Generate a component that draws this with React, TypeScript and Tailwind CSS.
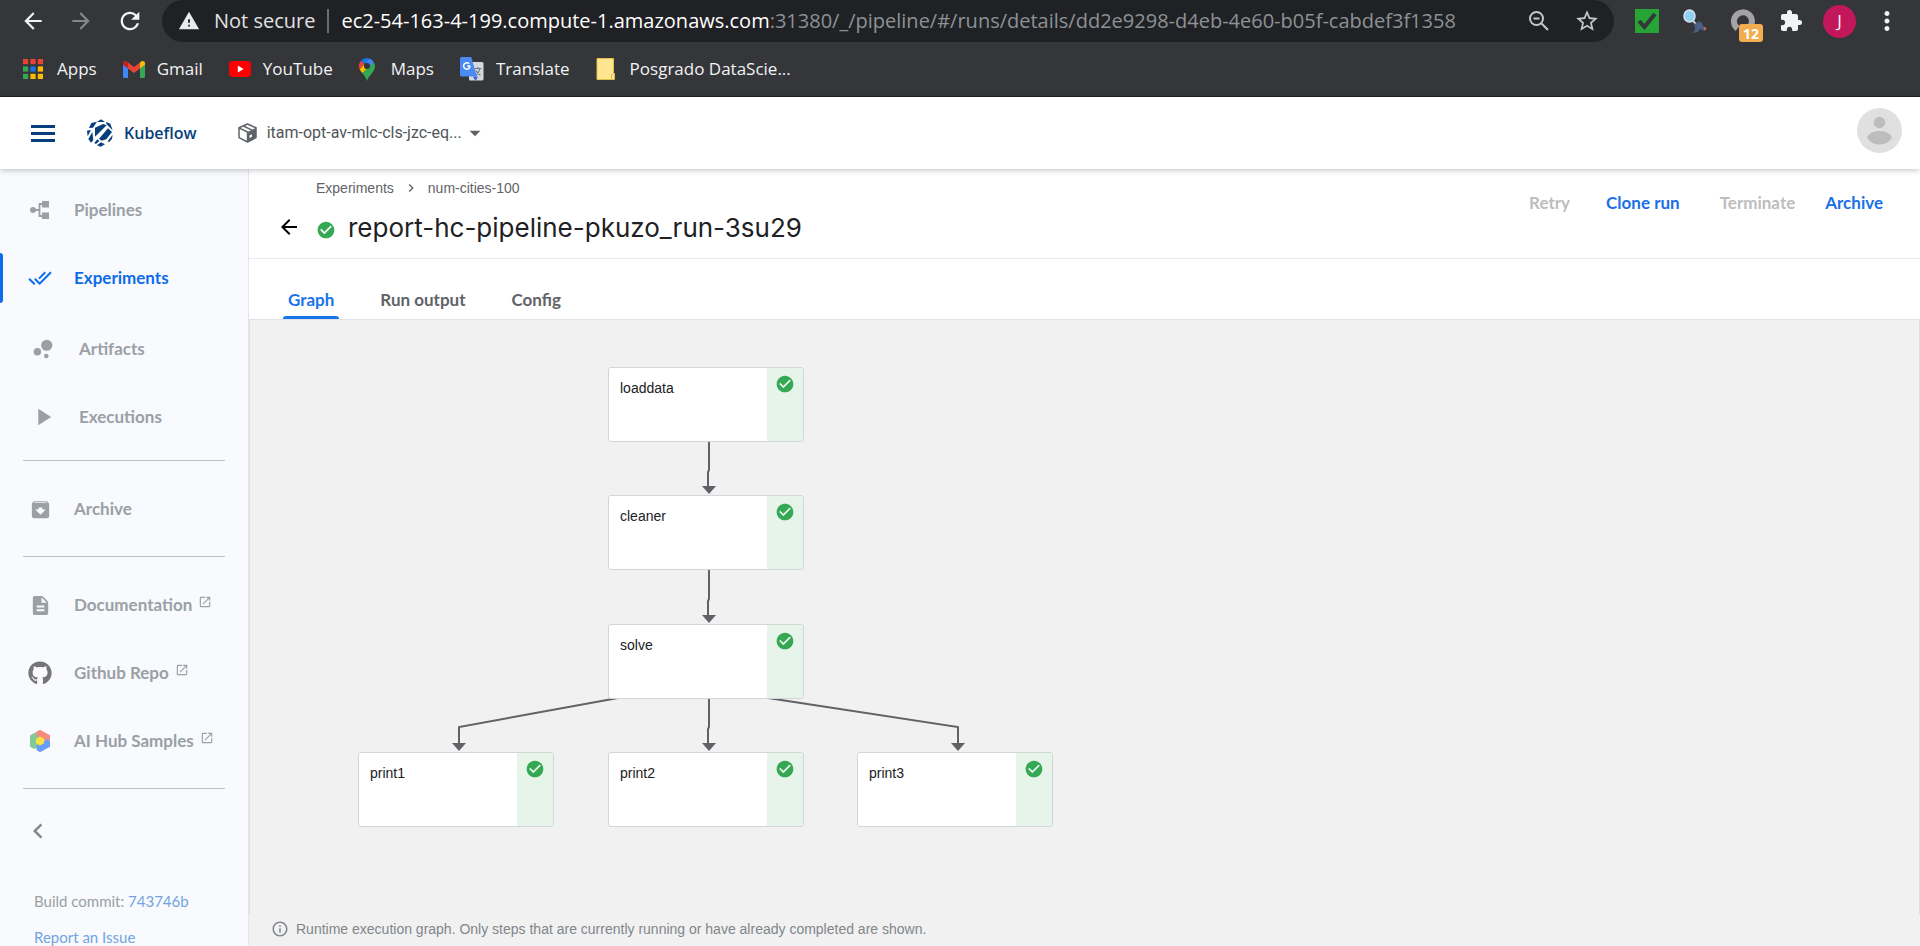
import React from "react";
import {
  MdArchive,
  MdArrowBack,
  MdArrowDropDown,
  MdArrowForward,
  MdBubbleChart,
  MdCheckCircle,
  MdChevronLeft,
  MdChevronRight,
  MdDescription,
  MdDoneAll,
  MdExtension,
  MdInfoOutline,
  MdMoreVert,
  MdOpenInNew,
  MdPlayArrow,
  MdRefresh,
  MdStarBorder,
  MdWarning,
} from "react-icons/md";
import { FaGithub } from "react-icons/fa";

const APP_DOTS = [
  "#ea4335", "#ea4335", "#ea4335",
  "#34a853", "#1a73e8", "#fbbc04",
  "#34a853", "#fbbc04", "#fbbc04",
];

function AppsIcon() {
  return (
    <svg className="h-5 w-5" viewBox="0 0 20 20" aria-hidden="true">
      {APP_DOTS.map((color, i) => (
        <rect key={i} x={(i % 3) * 7.4} y={Math.floor(i / 3) * 7.4} width="5.2" height="5.2" fill={color} />
      ))}
    </svg>
  );
}

function GmailIcon() {
  return (
    <svg className="h-[17px] w-[22px]" viewBox="0 0 22 17" aria-hidden="true">
      <path d="M0 3.5 5 7v10H1.5A1.5 1.5 0 0 1 0 15.500Z" fill="#4285f4" />
      <path d="M22 3.500 17 7v10h3.500A1.500 1.500 0 0 0 22 15.500Z" fill="#34a853" />
      <path d="M17 1.400V7.400L22 3.700V2.200C22 .2 19.700-.6 18.200.5Z" fill="#fbbc04" />
      <path d="M5 7.400V1.400L11 6l6-4.600v6L11 12Z" fill="#ea4335" />
      <path d="M0 2.200v1.500L5 7.400v-6L3.800.5C2.300-.6 0 .2 0 2.200Z" fill="#c5221f" />
    </svg>
  );
}

function YouTubeIcon() {
  return (
    <svg className="h-4 w-[22px]" viewBox="0 0 22 16" aria-hidden="true">
      <rect width="22" height="16" rx="4" fill="#f00" />
      <path d="M8.800 4.600v6.800L14.600 8Z" fill="#fff" />
    </svg>
  );
}

function MapsIcon() {
  return (
    <svg className="h-[23px] w-4" viewBox="0 0 16 23" aria-hidden="true">
      <path d="M8 0a8 8 0 0 0-6.200 2.900L5.600 6.100 10.500.4A8 8 0 0 0 8 0Z" fill="#1a73e8" />
      <path d="M1.800 2.900A8 8 0 0 0 .7 11.300L5.600 6.100Z" fill="#ea4335" />
      <path d="M10.500.4 5.600 6.100a3.200 3.200 0 0 1 4.900 4L15 4.500A8 8 0 0 0 10.500.4Z" fill="#4285f4" />
      <path d="M5.600 6.100.7 11.300c.6 1.300 1.500 2.500 2.500 3.800l7.300-5A3.200 3.200 0 0 1 5.600 6.100Z" fill="#fbbc04" />
      <path d="M15 4.500 3.200 15.100C5 17.300 6.700 18.700 8 23c1.700-6 8-8.500 8-15a8 8 0 0 0-1-3.500Z" fill="#34a853" />
      <circle cx="8" cy="8" r="3" fill="#35363a" />
    </svg>
  );
}

function TranslateIcon() {
  return (
    <svg className="h-6 w-6" viewBox="0 0 24 24" aria-hidden="true">
      <rect x="9" y="5" width="14.500" height="18.500" rx="1.500" fill="#d5d8dc" />
      <path d="M13 19.500h5L15.500 24Z" fill="#3b5bdb" />
      <path d="M1.500 0h9.700L17 19.500H1.500A1.500 1.500 0 0 1 0 18V1.500A1.500 1.500 0 0 1 1.500 0Z" fill="#4a8af4" />
      <path d="M10 8.700a3.200 3.200 0 1 1-.9-2M10 9H7.200" fill="none" stroke="#fff" strokeWidth="1.500" />
      <path d="M14.500 11.500h7M18 10v1.500M20 11.500c-.5 3-2 5-4 6.500M16 13.500c.9 2 2.300 3.600 4.500 4.800" fill="none" stroke="#6b7884" strokeWidth="1.200" />
    </svg>
  );
}

function FolderIcon() {
  return (
    <svg className="h-[22px] w-5" viewBox="0 0 20 22" aria-hidden="true">
      <path d="M1 .5h16.500V15l1 .5v6H1Z" fill="#fde68f" stroke="#e3bf4b" />
      <path d="M15.500 21v-4.500l3-1" fill="none" stroke="#e3bf4b" />
    </svg>
  );
}

function KubeflowLogo() {
  return (
    <svg className="h-7 w-[26px] shrink-0" viewBox="0 0 78 82" aria-hidden="true" fill="#073f7d">
      <path d="M30 8 42 0l12 8Z" />
      <path d="M6 26 13 11 30 7 18 25Z" />
      <path d="M57 8 70 13l7 20-19-19Z" />
      <path d="M0 34 12 32 2 51Z" />
      <path d="M4 59 16 38l3 24-7 8Z" />
      <path d="M24 25 48 14l11 4-35 34Z" />
      <path d="M36 58 63 27 75 38 58 60l-14 4Z" />
      <path d="M22 71 31 60l6 5-10 9Z" />
      <path d="M30 78 42 69l12 6-13 7Z" />
      <path d="M62 66 77 46l-2 12-8 10Z" />
    </svg>
  );
}

function CubeIcon() {
  return (
    <svg className="h-5 w-[19px] shrink-0" viewBox="0 0 19 20" aria-hidden="true">
      <path d="M9.500 1 18 4.800v9.900L9.500 19 1 14.700V4.800Z" fill="#fff" stroke="#5f6368" strokeWidth="1.500" strokeLinejoin="round" />
      <path d="M9.500 9 18 4.800v9.900L9.500 19Z" fill="#5f6368" />
      <path d="M1 4.800 9.500 9v10M5.500 3l8.500 4.200" fill="none" stroke="#5f6368" strokeWidth="1.400" />
      <path d="m11.500 12.500 2.500-1.200v2.500L11.500 15Z" fill="#fff" />
    </svg>
  );
}

function PipelinesIcon() {
  return (
    <svg className="h-5 w-5" viewBox="0 0 20 20" aria-hidden="true">
      <circle cx="3" cy="10" r="3" fill="#9aa0a6" />
      <path d="M3 10h6M14 4H9.500v12H14" fill="none" stroke="#9aa0a6" strokeWidth="1.800" />
      <rect x="12" y="1" width="7" height="6.500" fill="#9aa0a6" />
      <rect x="12" y="12.500" width="7" height="6.500" fill="#9aa0a6" />
    </svg>
  );
}

function AiHubIcon() {
  return (
    <svg className="h-6 w-[22px]" viewBox="0 0 22 24" aria-hidden="true">
      <path d="M1 6.500 6 3.500l5 3v11L5 20l-4-2.500Z" fill="#81c995" />
      <path d="M7 3 11 .8l10 5.500v5L18 13 7 6.500Z" fill="#f28b82" />
      <path d="M21 12v5.800L11 23.300 7.500 21v-4.500L18 10.500Z" fill="#669df6" />
      <path d="m11 7.500 4 2.200v4.600l-4 2.200-4-2.200V9.700Z" fill="#fde047" />
    </svg>
  );
}

function ZoomIcon() {
  return (
    <svg className="h-[22px] w-[22px]" viewBox="0 0 22 22" fill="none" stroke="#c4c7c9" strokeWidth="2" aria-hidden="true">
      <circle cx="8.500" cy="8.500" r="6.500" />
      <path d="m13.300 13.300 6.700 6.700M5.500 8.500h6" />
    </svg>
  );
}

function DetectiveIcon() {
  return (
    <svg className="h-6 w-6" viewBox="0 0 24 24" aria-hidden="true">
      <path d="m10 12 4 4" stroke="#c3cdd6" strokeWidth="2" />
      <ellipse cx="6.500" cy="7" rx="5.500" ry="6" fill="#8fd0f3" stroke="#d5e6f0" strokeWidth="1.500" />
      <path d="m11 15 3-1 2-2 3 2 1 3 3 2-1 3-3-1-2-1-2 3-6 1 3-3 0-2Z" fill="#4a5f86" />
      <circle cx="22" cy="19.500" r="1.200" fill="#e2703a" />
    </svg>
  );
}

function BrowserBar() {
  const bookmark = "flex items-center text-[17px] text-[#f1f3f4]";
  return (
    <div className="h-[97px] shrink-0 border-b border-[#202124] bg-[#35363a] font-['Open_Sans','Noto_Sans',sans-serif]">
      <div className="flex h-[42px] items-center">
        <div className="flex w-[162px] shrink-0 items-center gap-[22px] pl-5">
          <button aria-label="Back"><MdArrowBack className="h-[26px] w-[26px] text-[#f1f3f4]" /></button>
          <button aria-label="Forward"><MdArrowForward className="h-[26px] w-[26px] text-[#85878a]" /></button>
          <button aria-label="Reload"><MdRefresh className="h-7 w-7 text-[#f1f3f4]" /></button>
        </div>
        <div className="flex h-full min-w-0 flex-1 items-center rounded-[21px] bg-[#202124] pr-[14px] pl-4">
          <MdWarning className="h-[22px] w-[22px] shrink-0 text-[#e8eaed]" />
          <span className="ml-[14px] text-[20px] whitespace-nowrap text-[#e0e2e4]">Not secure</span>
          <span className="mx-3 h-6 w-[2px] shrink-0 bg-[#6b6d70]" />
          <span className="min-w-0 flex-1 truncate text-[20px] text-[#8d9196]">
            <span className="text-white">ec2-54-163-4-199.compute-1.amazonaws.com</span>
            :31380/_/pipeline/#/runs/details/dd2e9298-d4eb-4e60-b05f-cabdef3f1358
          </span>
          <button aria-label="Zoom" className="mr-6"><ZoomIcon /></button>
          <button aria-label="Bookmark this page"><MdStarBorder className="h-[26px] w-[26px] text-[#c4c7c9]" /></button>
        </div>
        <div className="flex w-[306px] shrink-0 items-center pl-[21px]">
          <button aria-label="Tasks extension" className="flex h-6 w-6 items-center justify-center bg-[#27a436]">
            <svg className="h-5 w-5" viewBox="0 0 20 20" fill="none" stroke="#35363a" strokeWidth="4" aria-hidden="true"><path d="m2 10 5.500 6L18 3" /></svg>
          </button>
          <button aria-label="Search extension" className="ml-6"><DetectiveIcon /></button>
          <button aria-label="Notifications extension" className="relative ml-[22px] h-7 w-7">
            <svg className="h-7 w-7" viewBox="0 0 28 28" fill="none" stroke="#a3a3a3" strokeWidth="6" aria-hidden="true"><path d="M8.500 21.500a9 9 0 1 1 12-1" /></svg>
            <span className="absolute top-[17px] left-[10px] flex h-[18px] w-6 items-center justify-center rounded-[3px] bg-[#f3ad4e] text-[14px] font-bold text-white">12</span>
          </button>
          <button aria-label="Extensions" className="ml-[22px]"><MdExtension className="h-6 w-6 text-[#f1f3f4]" /></button>
          <button aria-label="Profile" className="ml-5 flex h-[33px] w-[33px] items-center justify-center rounded-full bg-[#c2185b] text-[17px] text-white">J</button>
          <button aria-label="Menu" className="ml-4"><MdMoreVert className="h-[30px] w-[30px] text-[#f1f3f4]" /></button>
        </div>
      </div>
      <nav aria-label="Bookmarks" className="flex h-[54px] items-center gap-[26px] pl-[23px]">
        <a href="#apps" className={bookmark}><AppsIcon /><span className="ml-[14px]">Apps</span></a>
        <a href="#gmail" className={bookmark}><GmailIcon /><span className="ml-3">Gmail</span></a>
        <a href="#youtube" className={bookmark}><YouTubeIcon /><span className="ml-3">YouTube</span></a>
        <a href="#maps" className={bookmark}><MapsIcon /><span className="ml-4">Maps</span></a>
        <a href="#translate" className={bookmark}><TranslateIcon /><span className="ml-3">Translate</span></a>
        <a href="#posgrado" className={bookmark}><FolderIcon /><span className="ml-[14px]">Posgrado DataScie...</span></a>
      </nav>
    </div>
  );
}

function AppHeader() {
  return (
    <header className="relative z-10 flex h-[72px] shrink-0 items-center bg-white pr-[18px] pl-[31px] shadow-[0_1px_6px_rgba(0,0,0,0.25)]">
      <button aria-label="Toggle menu" className="flex w-6 flex-col gap-1">
        <span className="h-[3px] w-full bg-[#073f7d]" />
        <span className="h-[3px] w-full bg-[#073f7d]" />
        <span className="h-[3px] w-full bg-[#073f7d]" />
      </button>
      <a href="#home" className="ml-8 flex items-center font-['Open_Sans',sans-serif] text-[16px] font-semibold text-[#073f7d]">
        <KubeflowLogo />
        <span className="ml-[11px]">Kubeflow</span>
      </a>
      <button className="ml-[41px] flex items-center font-[Roboto,sans-serif] text-[16px] text-[#50555a]">
        <CubeIcon />
        <span className="ml-[10px]">itam-opt-av-mlc-cls-jzc-eq...</span>
        <MdArrowDropDown className="h-[26px] w-[26px] text-[#5f6368]" />
      </button>
      <button aria-label="Account" className="mb-[5px] ml-auto">
        <svg className="h-[45px] w-[45px]" viewBox="0 0 45 45" aria-hidden="true">
          <circle cx="22.500" cy="22.500" r="22.500" fill="#e0e0e0" />
          <circle cx="22.500" cy="14.500" r="5.700" fill="#bdbdbd" />
          <path d="M10 29.500c2-4.500 7-6.500 12.500-6.500S33 25 35 29.500c-2.500 4.500-7 7-12.500 7s-10-2.500-12.500-7Z" fill="#bdbdbd" />
        </svg>
      </button>
    </header>
  );
}

type NavItemProps = {
  label: string;
  icon: React.ReactNode;
  active?: boolean;
  inset?: boolean;
  external?: boolean;
};

function NavItem({ label, icon, active, inset, external }: NavItemProps) {
  return (
    <a
      href={`#${label.toLowerCase().replace(/ /g, "-")}`}
      className={`flex h-[68px] items-center ${active ? "text-[#0d6ce8]" : "text-[#9aa0a6]"}`}
    >
      <span className={`h-[50px] w-[3px] rounded-r-[3px] ${active ? "bg-[#0d6ce8]" : ""}`} />
      <span className={`flex w-6 justify-center ${inset ? "ml-7" : "ml-[25px]"}`}>{icon}</span>
      <span className={`font-[Lato,sans-serif] text-[17px] font-bold ${inset ? "ml-6" : "ml-[22px]"}`}>{label}</span>
      {external && <MdOpenInNew className="mb-[6px] ml-[6px] h-[14px] w-[14px]" />}
    </a>
  );
}

function Divider() {
  return <hr className="mr-[23px] ml-[23px] border-[#bcbfc3]" />;
}

function Sidebar() {
  return (
    <aside className="flex w-[249px] shrink-0 flex-col overflow-hidden border-r border-[#e4e6e9] bg-[#f8fafd]">
      <nav aria-label="Main">
        <div className="pt-[7px] pb-[9px]">
          <NavItem label="Pipelines" icon={<PipelinesIcon />} />
          <NavItem label="Experiments" icon={<MdDoneAll className="h-6 w-6" />} active />
          <div className="pt-[3px]">
            <NavItem label="Artifacts" icon={<MdBubbleChart className="h-7 w-7 shrink-0" />} inset />
            <NavItem label="Executions" icon={<MdPlayArrow className="h-7 w-7 shrink-0" />} inset />
          </div>
        </div>
        <Divider />
        <div className="pt-[14px] pb-[13px]">
          <NavItem label="Archive" icon={<MdArchive className="h-[23px] w-[23px]" />} />
        </div>
        <Divider />
        <div className="pt-[14px] pb-[13px]">
          <NavItem label="Documentation" icon={<MdDescription className="h-[23px] w-[23px]" />} external />
          <NavItem label="Github Repo" icon={<FaGithub className="h-6 w-6 text-[#757575]" />} external />
          <NavItem label="AI Hub Samples" icon={<AiHubIcon />} external />
        </div>
        <Divider />
      </nav>
      <button aria-label="Collapse sidebar" className="mt-[27px] ml-[23px] w-8"><MdChevronLeft className="h-[30px] w-[30px] text-[#80868b]" /></button>
      <div className="mt-[37px] ml-[34px] font-[Lato,sans-serif] text-[15px] leading-9 text-[#9aa0a6]">
        <p>Build commit: <a href="#commit" className="text-[#72a4e0]">743746b</a></p>
        <p><a href="#issue" className="text-[#72a4e0]">Report an Issue</a></p>
      </div>
    </aside>
  );
}

function PageHeader() {
  return (
    <div className="flex h-[90px] shrink-0 justify-between border-b border-[#e8eaed] bg-white">
      <div>
        <nav aria-label="Breadcrumb" className="flex h-[38px] items-center pl-[67px] font-['Liberation_Sans',Arial,sans-serif] text-[14px] text-[#5f6368]">
          <a href="#experiments">Experiments</a>
          <MdChevronRight className="mx-[9px] h-4 w-4" />
          <a href="#num-cities-100">num-cities-100</a>
        </nav>
        <div className="flex h-10 items-center pl-7">
          <button aria-label="Back to runs"><MdArrowBack className="h-6 w-6 text-black" /></button>
          <MdCheckCircle className="mt-[6px] ml-[15px] h-5 w-5 text-[#34a853]" />
          <h1 className="ml-3 font-[Inter,sans-serif] text-[26px] text-[#202124]">report-hc-pipeline-pkuzo_run-3su29</h1>
        </div>
      </div>
      <div className="flex h-[67px] items-center pr-[37px] font-[Lato,sans-serif] text-[17px] font-bold text-[#1a6fe8]">
        <button disabled className="text-[#bdbdbd]">Retry</button>
        <button className="ml-9">Clone run</button>
        <button disabled className="ml-10 text-[#bdbdbd]">Terminate</button>
        <button className="ml-[30px]">Archive</button>
      </div>
    </div>
  );
}

function Tabs() {
  return (
    <div role="tablist" className="flex h-[61px] shrink-0 border-b border-[#e0e2e4] bg-white pl-[34px] font-[Lato,sans-serif] text-[17px] font-bold text-[#5f6368]">
      <button role="tab" aria-selected="true" className="relative px-[5px] pt-[21px] text-[#1a73e8]">
        Graph
        <span className="absolute inset-x-0 bottom-0 h-[3px] rounded-t-[3px] bg-[#1a73e8]" />
      </button>
      <button role="tab" aria-selected="false" className="ml-9 px-[5px] pt-[21px]">Run output</button>
      <button role="tab" aria-selected="false" className="ml-9 px-[5px] pt-[21px]">Config</button>
    </div>
  );
}

const NODES = [
  { name: "loaddata", x: 358, y: 47 },
  { name: "cleaner", x: 358, y: 175 },
  { name: "solve", x: 358, y: 304 },
  { name: "print1", x: 108, y: 432 },
  { name: "print2", x: 358, y: 432 },
  { name: "print3", x: 607, y: 432 },
];

const EDGES = [
  "M459 121V150L458 152V168",
  "M459 249V279L458 281V297",
  "M459 378V407L458 409V425",
  "M368 378 209 407V425",
  "M518 378 708 407V425",
];

const ARROWS = [
  { x: 459, y: 166 },
  { x: 459, y: 295 },
  { x: 459, y: 423 },
  { x: 209, y: 423 },
  { x: 708, y: 423 },
];

function Graph() {
  return (
    <div className="relative min-h-0 flex-1 overflow-hidden border-x border-[#dcdee0]">
      <svg className="absolute top-0 left-0 h-[594px] w-[1100px]" viewBox="0 0 1100 594" aria-hidden="true">
        {EDGES.map((d) => (
          <path key={d} d={d} fill="none" stroke="#5f6368" strokeWidth="2" />
        ))}
        {ARROWS.map((a) => (
          <path key={`${a.x}-${a.y}`} d={`M${a.x - 7} ${a.y}h14l-7 8Z`} fill="#5f6368" />
        ))}
      </svg>
      {NODES.map((n) => (
        <button
          key={n.name}
          className="absolute flex h-[75px] w-[196px] overflow-hidden rounded-[3px] border border-[#d3d5d7] bg-white text-left"
          style={{ left: n.x, top: n.y }}
        >
          <span className="flex-1 pt-[10px] pl-[11px] font-['Liberation_Sans',Arial,sans-serif] text-[14px] text-[#202124]">{n.name}</span>
          <span className="flex h-full w-9 justify-center bg-[#e6f4ea] pt-[6px]">
            <MdCheckCircle className="h-5 w-5 text-[#34a853]" />
          </span>
        </button>
      ))}
    </div>
  );
}

export default function App() {
  return (
    <div className="flex h-screen flex-col overflow-hidden bg-white">
      <BrowserBar />
      <AppHeader />
      <div className="flex min-h-0 flex-1">
        <Sidebar />
        <main className="flex min-w-0 flex-1 flex-col bg-[#f1f1f1]">
          <PageHeader />
          <Tabs />
          <Graph />
          <div className="flex h-8 shrink-0 items-center pb-[2px] pl-[22px] font-['Liberation_Sans',Arial,sans-serif] text-[14px] text-[#80868b]">
            <MdInfoOutline className="h-[18px] w-[18px]" />
            <span className="ml-[7px]">Runtime execution graph. Only steps that are currently running or have already completed are shown.</span>
          </div>
        </main>
      </div>
    </div>
  );
}
